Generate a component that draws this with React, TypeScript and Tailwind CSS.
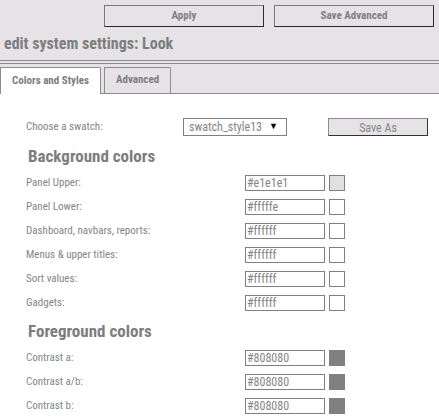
import React from "react";

const bg = [
  { label: "Panel Upper:", value: "#e1e1e1", color: "#e1e1e1" },
  { label: "Panel Lower:", value: "#fffffe", color: "#fffffe" },
  { label: "Dashboard, navbars, reports:", value: "#ffffff", color: "#ffffff" },
  { label: "Menus & upper titles:", value: "#ffffff", color: "#ffffff" },
  { label: "Sort values:", value: "#ffffff", color: "#ffffff" },
  { label: "Gadgets:", value: "#ffffff", color: "#ffffff" },
];

const fg = [
  { label: "Contrast a:", value: "#808080", color: "#808080" },
  { label: "Contrast a/b:", value: "#808080", color: "#808080" },
  { label: "Contrast b:", value: "#808080", color: "#808080" },
];

function Row({ label, value, color }: { label: string; value: string; color: string }) {
  return (
    <div className="flex h-[16px] items-center">
      <div className="w-[245px] pl-[26px] text-[11px] leading-[16px] text-[#858585]">{label}</div>
      <div className="flex h-[16px] w-[80px] items-center border border-[#808080] bg-white pl-[1px] text-[12px] leading-[14px] text-[#858585]">
        {value}
      </div>
      <div className="ml-[4px] h-[16px] w-[16px] border border-[#808080]" style={{ backgroundColor: color }} />
    </div>
  );
}

function Heading({ children }: { children: React.ReactNode }) {
  return (
    <div className="mt-[5px] mb-[4px] h-[30px] pl-[28px] text-[17px] font-bold leading-[30px] text-[#7d7d7d]">
      {children}
    </div>
  );
}

export default function App() {
  return (
    <div
      className="h-[419px] w-[439px] overflow-hidden bg-white font-stretch-condensed"
      style={{ fontFamily: '"Roboto Condensed", Roboto, "Liberation Sans", sans-serif' }}
    >
      <div className="bg-[#e5e3e6]">
        <div className="flex justify-end gap-[10px] pt-[5px] pr-[5px]">
          <button className="h-[22px] w-[160px] border border-t-[#7a7a7a] border-l-[#7a7a7a] border-r-[#2b2b2b] border-b-[#2b2b2b] bg-[#e5e3e6] text-[11px] font-bold text-[#808080]">
            Apply
          </button>
          <button className="h-[22px] w-[160px] border border-t-[#7a7a7a] border-l-[#7a7a7a] border-r-[#2b2b2b] border-b-[#2b2b2b] bg-[#e5e3e6] text-[11px] font-bold text-[#808080]">
            Save Advanced
          </button>
        </div>
        <div className="flex h-[33px] items-center pl-[4px] text-[16px] font-bold text-[#7d7d7d]">
          edit system settings: Look
        </div>
        <div className="h-[4px] border-y border-[#8c8c8c]" />
        <div className="flex h-[30px] items-end gap-[3px] border-b border-[#8c8c8c]">
          <div className="-mb-px flex h-[27px] w-[101px] items-center justify-center rounded-tr-[2px] border border-b-0 border-[#8c8c8c] bg-white text-[11px] font-bold text-[#7d7d7d]">
            Colors and Styles
          </div>
          <div className="flex h-[26px] w-[67px] items-center justify-center rounded-tr-[2px] border border-b-0 border-[#8c8c8c] bg-[#e5e3e6] text-[11px] font-bold text-[#7d7d7d]">
            Advanced
          </div>
        </div>
      </div>
      <div className="pt-[24px]">
        <div className="flex h-[18px] items-center">
          <div className="w-[183px] pl-[26px] text-[11px] text-[#858585]">Choose a swatch:</div>
          <div className="flex h-[18px] w-[104px] items-center justify-between border border-[#808080] bg-white pr-[8px] pl-[5px] text-[12px] text-[#858585]">
            <span>swatch_style13</span>
            <span className="text-[9px] text-black">▼</span>
          </div>
          <button className="ml-[41px] h-[18px] w-[100px] border border-t-[#8c8c8c] border-l-[#8c8c8c] border-r-[#333333] border-b-[#333333] bg-[#e5e3e6] text-[12px] text-[#858585]">
            Save As
          </button>
        </div>
        <Heading>Background colors</Heading>
        <div className="flex flex-col gap-[8px]">
          {bg.map((r) => (
            <Row key={r.label} {...r} />
          ))}
        </div>
        <Heading>Foreground colors</Heading>
        <div className="flex flex-col gap-[8px]">
          {fg.map((r) => (
            <Row key={r.label} {...r} />
          ))}
        </div>
      </div>
    </div>
  );
}
